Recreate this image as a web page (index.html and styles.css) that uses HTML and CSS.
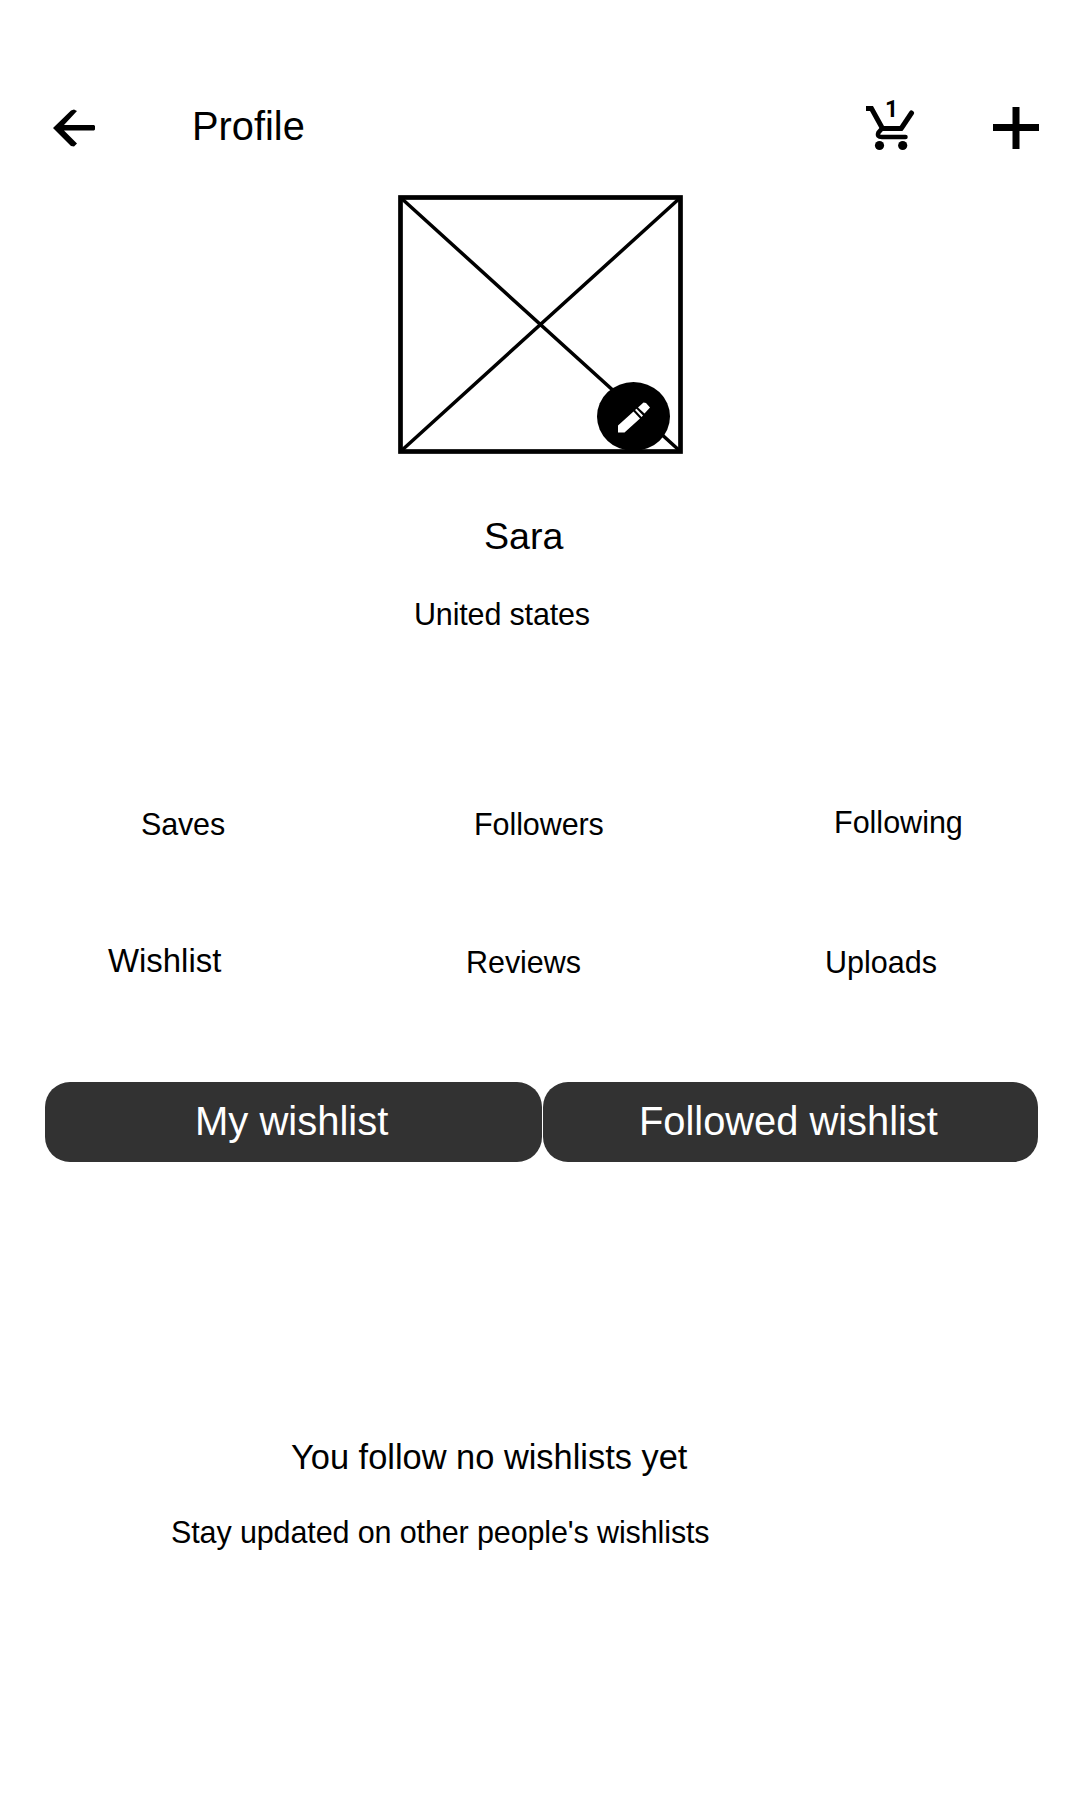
FILE: index.html
```html
<!DOCTYPE html>
<html lang="en">
<head>
<meta charset="utf-8">
<title>Profile</title>
<link rel="stylesheet" href="styles.css">
</head>
<body>
<header class="topbar">
  <svg class="back" width="44" height="40" viewBox="0 0 44 40">
    <path d="M1 19 L19 1.500 L22 0.500 L25 2 L12 16 H42 L43 17 V20.500 L42 21.500 H12 L25 34.500 L22 37.500 L19 37 Z"/>
  </svg>
  <h1 class="title">Profile</h1>
  <div class="cart">
    <svg width="52" height="52" viewBox="0 0 52 52" fill="none" stroke="#000" stroke-width="5">
      <path d="M1 8.500 H6.500 L17.500 28.500 M15.500 28.500 H37.500" />
      <path d="M36.500 28 L46.500 13" stroke-linecap="round"/>
      <path d="M17 28.500 L13.500 32.500 Q11.500 37 17 37 H40.500" stroke-width="4.500" stroke-linecap="round"/>
      <circle cx="14.500" cy="45.500" r="4.600" fill="#000" stroke="none"/>
      <circle cx="37.700" cy="45.500" r="4.600" fill="#000" stroke="none"/>
    </svg>
    <span class="cart-count">1</span>
  </div>
  <svg class="plus" width="46" height="42" viewBox="0 0 46 42">
    <path d="M19.500 0 H26.500 V17 H46 V24 H26.500 V42 H19.500 V24 H0 V17 H19.500 Z"/>
  </svg>
</header>
<main>
  <section class="person">
    <div class="photo">
      <svg width="285" height="259" viewBox="0 0 285 259" fill="none" stroke="#000">
        <rect x="2.500" y="2.500" width="280" height="254" stroke-width="4.700"/>
        <path d="M2.500 2.500 L282.500 256.500 M282.500 2.500 L2.500 256.500" stroke-width="3.500"/>
      </svg>
      <svg class="edit" width="73" height="69" viewBox="0 0 73 69">
        <ellipse cx="36.500" cy="34.500" rx="36.500" ry="34.500"/>
        <path fill="#fff" d="M21 43.500 L36.500 29.500 L43 36.500 L27.500 50.500 H21 Z M38 28 L39.500 26.700 L46 33.500 L44.500 35 Z M41 25.500 L46.500 20.500 L49 21 L53 25.500 L47.500 31.500 Z"/>
      </svg>
    </div>
    <h2 class="name">Sara</h2>
    <p class="country">United states</p>
  </section>
  <nav class="stats">
    <span class="saves">Saves</span>
    <span class="followers">Followers</span>
    <span class="following">Following</span>
    <span class="wishlist">Wishlist</span>
    <span class="reviews">Reviews</span>
    <span class="uploads">Uploads</span>
  </nav>
  <div class="tabs">
    <button class="tab mine">My wishlist</button>
    <button class="tab followed">Followed wishlist</button>
  </div>
  <section class="empty">
    <h3 class="empty-title">You follow no wishlists yet</h3>
    <p class="empty-text">Stay updated on other people's wishlists</p>
  </section>
</main>
</body>
</html>
```
FILE: styles.css
```css
* { box-sizing: border-box; }

body {
  margin: 0;
  width: 1080px;
  height: 1800px;
  background: #fff;
  color: #000;
  font-family: "Liberation Sans", Arial, sans-serif;
  font-size: 30.5px;
  line-height: 40px;
  overflow: hidden;
}

h1, h2, h3, p { margin: 0; font-weight: 400; white-space: nowrap; }
svg { display: block; flex: none; }

.topbar {
  display: flex;
  align-items: flex-start;
  height: 195px;
  padding-left: 52px;
}
.back { margin-top: 109px; }
.title { margin: 106px 0 0 96px; width: 673px; font-size: 39.8px; }
.cart { position: relative; margin-top: 100px; }
.cart-count {
  position: absolute;
  left: 20px;
  top: -2px;
  font: 700 23px/24px Roboto, sans-serif;
}
.plus { margin: 107px 0 0 76px; }

.photo { position: relative; width: 285px; height: 259px; margin-left: 398px; }
.edit { position: absolute; left: 199px; top: 187px; }

.name { margin: 62px 0 0 484px; font-size: 37.6px; }
.country { margin: 38px 0 0 414px; letter-spacing: -0.16px; }

.stats {
  display: grid;
  grid-template-columns: 333px 360px 1fr;
  grid-template-rows: 137px 141px;
  padding-left: 141px;
  margin-top: 170px;
  height: 278px;
}
.stats .saves { letter-spacing: -0.15px; }
.stats .followers { letter-spacing: -0.08px; }
.stats .following { margin-top: -2px; }
.stats .wishlist { margin-left: -33px; font-size: 32.9px; }
.stats .reviews { margin: 1px 0 0 -8px; letter-spacing: -0.05px; }
.stats .uploads { margin: 1px 0 0 -9px; }

.tabs { display: flex; gap: 1px; padding-left: 45px; }
.tab {
  width: 497px;
  height: 80px;
  padding: 0 0 2px;
  border: 0;
  border-radius: 25px;
  background: #323232;
  color: #fff;
  font: 40px/40px "Liberation Sans", Arial, sans-serif;
  text-align: left;
}
.mine { padding-left: 150px; }
.followed { width: 495px; padding-left: 96px; font-size: 39.85px; }

.empty { padding-top: 275px; }
.empty-title { margin-left: 291px; font-size: 34.4px; }
.empty-text { margin: 35px 0 0 171px; letter-spacing: -0.12px; }
```
